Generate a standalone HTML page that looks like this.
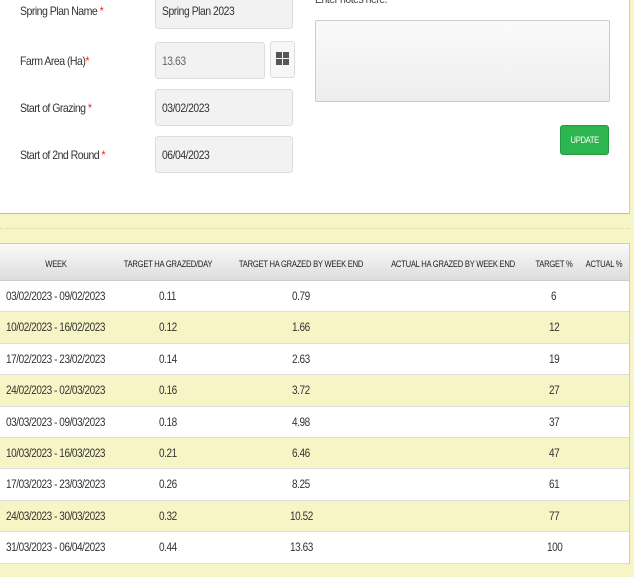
<!DOCTYPE html>
<html><head><style>
*{margin:0;padding:0;box-sizing:border-box}
body{width:634px;height:577px;background:#f7f5c5;font-family:"Liberation Sans",sans-serif;color:#333;position:relative;overflow:hidden}
.n{font-size:12px;letter-spacing:-0.6px;position:absolute;white-space:nowrap;transform:scaleX(0.88);transform-origin:left center}
.panel{position:absolute;left:0;top:0;width:630px;height:214px;background:#fff;border-bottom:1px solid #bbb;border-right:1px solid #ccc}
.inp{position:absolute;background:#f2f2f2;border:1px solid #ddd;border-radius:3px;font-size:12px;letter-spacing:-0.5px;padding-left:6px;display:flex;align-items:center}
.inp i{font-style:normal;display:inline-block;transform:scaleX(0.86);transform-origin:left center}
.r{color:#e22}
.dot{position:absolute;left:0;top:228px;width:630px;border-top:1px dotted #e8dc60}
.tbl{position:absolute;left:0;top:243px;width:630px;border-right:1px solid #ccc}
.hd{height:38px;background:linear-gradient(#fafafa,#ddd);border-top:1px solid #ccc;border-bottom:1px solid #ccc;position:relative;font-size:9.5px;letter-spacing:-0.3px;color:#222}
.hd span{position:absolute;top:15px;transform:translateX(-50%) scaleX(0.8);white-space:nowrap}
.row{height:31.4px;position:relative;border-bottom:1px solid #ddd;font-size:11.5px;letter-spacing:-0.5px;background:#fff}
.row.y{background:#f7f5c5}
.row span{position:absolute;top:10px;white-space:nowrap;transform:scaleX(0.87);transform-origin:left center}
</style></head><body>
<div class="panel">
 <div class="n" style="left:20px;top:4px">Spring Plan Name <span class="r">*</span></div>
 <div class="n" style="left:20px;top:54px">Farm Area (Ha)<span class="r">*</span></div>
 <div class="n" style="left:20px;top:101px">Start of Grazing <span class="r">*</span></div>
 <div class="n" style="left:20px;top:148px">Start of 2nd Round <span class="r">*</span></div>
 <div class="inp" style="left:155px;top:-8px;width:138px;height:37px;padding-top:0px"><i>Spring Plan 2023</i></div>
 <div class="inp" style="left:155px;top:42px;width:110px;height:37px;color:#666"><i>13.63</i></div>
 <div style="position:absolute;left:270px;top:41px;width:25px;height:37px;border:1px solid #ddd;border-radius:3px;background:#f7f7f7">
  <svg width="25" height="37" style="position:absolute;left:-1px;top:-1px"><g fill="#555"><rect x="6" y="11" width="6" height="6"/><rect x="13" y="11" width="6" height="6"/><rect x="6" y="18" width="6" height="6"/><rect x="13" y="18" width="6" height="6"/></g></svg>
 </div>
 <div class="inp" style="left:155px;top:89px;width:138px;height:37px"><i>03/02/2023</i></div>
 <div class="inp" style="left:155px;top:136px;width:138px;height:37px"><i>06/04/2023</i></div>
 <div class="n" style="left:315px;top:-8px;color:#444">Enter notes here:</div>
 <div style="position:absolute;left:315px;top:20px;width:295px;height:82px;border:1px solid #ccc;border-radius:2px;background:linear-gradient(#fafafa,#eee)"></div>
 <div style="position:absolute;left:560px;top:125px;width:49px;height:30px;background:#2db550;border:1px solid #259a42;border-radius:3px;color:#fff;font-size:9px;letter-spacing:-0.4px;display:flex;align-items:center;justify-content:center"><span style="transform:scaleX(0.85)">UPDATE</span></div>
</div>
<div class="dot"></div>
<div class="tbl">
 <div class="hd"><span style="left:56px">WEEK</span><span style="left:168px">TARGET HA GRAZED/DAY</span><span style="left:301px">TARGET HA GRAZED BY WEEK END</span><span style="left:453px">ACTUAL HA GRAZED BY WEEK END</span><span style="left:554px">TARGET %</span><span style="left:604px">ACTUAL %</span></div>
 <div class="row"><span style="left:6px">03/02/2023 - 09/02/2023</span><span style="left:159px">0.11</span><span style="left:292px">0.79</span><span style="left:551px">6</span></div>
 <div class="row y"><span style="left:6px">10/02/2023 - 16/02/2023</span><span style="left:159px">0.12</span><span style="left:292px">1.66</span><span style="left:549px">12</span></div>
 <div class="row"><span style="left:6px">17/02/2023 - 23/02/2023</span><span style="left:159px">0.14</span><span style="left:292px">2.63</span><span style="left:549px">19</span></div>
 <div class="row y"><span style="left:6px">24/02/2023 - 02/03/2023</span><span style="left:159px">0.16</span><span style="left:292px">3.72</span><span style="left:549px">27</span></div>
 <div class="row"><span style="left:6px">03/03/2023 - 09/03/2023</span><span style="left:159px">0.18</span><span style="left:292px">4.98</span><span style="left:549px">37</span></div>
 <div class="row y"><span style="left:6px">10/03/2023 - 16/03/2023</span><span style="left:159px">0.21</span><span style="left:292px">6.46</span><span style="left:549px">47</span></div>
 <div class="row"><span style="left:6px">17/03/2023 - 23/03/2023</span><span style="left:159px">0.26</span><span style="left:292px">8.25</span><span style="left:549px">61</span></div>
 <div class="row y"><span style="left:6px">24/03/2023 - 30/03/2023</span><span style="left:159px">0.32</span><span style="left:290px">10.52</span><span style="left:549px">77</span></div>
 <div class="row"><span style="left:6px">31/03/2023 - 06/04/2023</span><span style="left:159px">0.44</span><span style="left:290px">13.63</span><span style="left:547px">100</span></div>
</div>
</body></html>
